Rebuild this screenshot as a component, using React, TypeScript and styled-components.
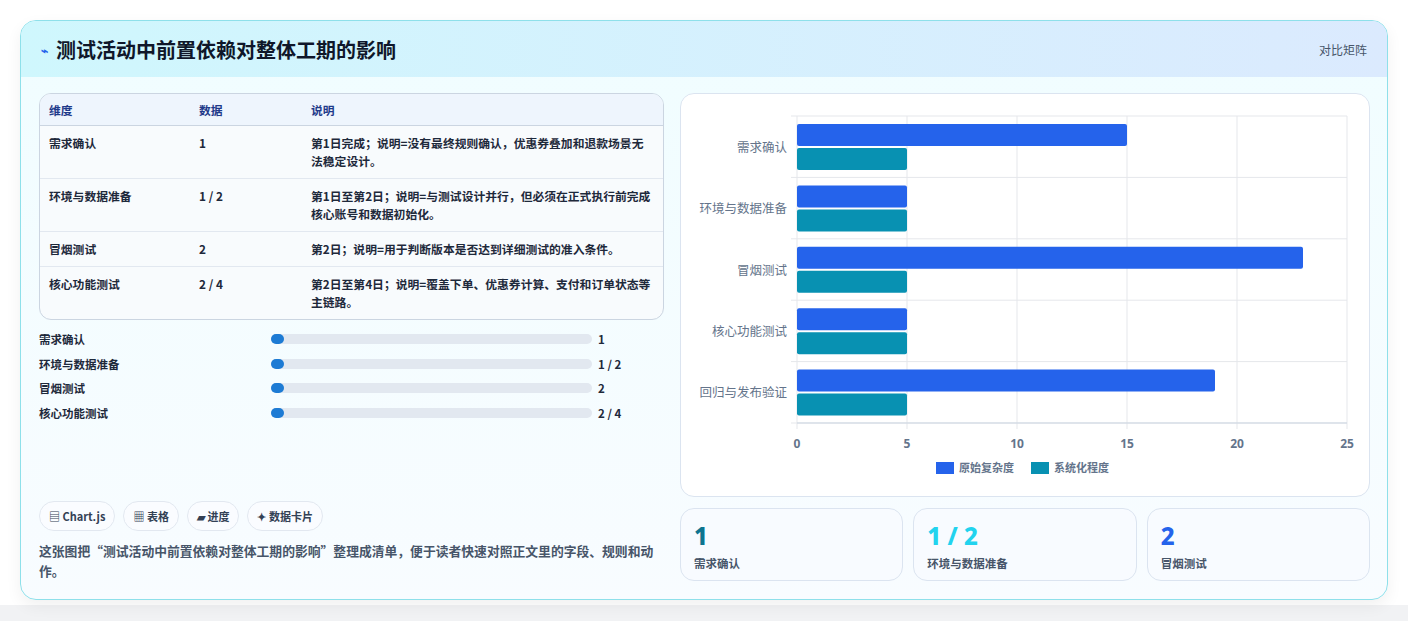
import React from "react";
import styled, { createGlobalStyle } from "styled-components";

const G = createGlobalStyle`
  html,body{margin:0;background:#fff;font-family:"Noto Sans CJK SC","Noto Sans",sans-serif;}
  *{box-sizing:border-box;}
`;
const Page = styled.div`padding:20px 20px 22px 20px;height:621px;background:linear-gradient(#fff 97.5%,#f1f2f4 97.5%);`;
const Card = styled.div`border:1px solid #8ee0ea;border-radius:16px;overflow:hidden;background:linear-gradient(180deg,#f0fdff,#f8fcff);box-shadow:0 6px 16px rgba(0,0,0,.06);height:580px;display:flex;flex-direction:column;`;
const Header = styled.div`height:56px;display:flex;align-items:center;justify-content:space-between;padding:0 20px;background:linear-gradient(90deg,#cff7fd,#dbeafe);`;
const Title = styled.h1`margin:0;font-size:20px;font-weight:700;color:#0f172a;display:flex;align-items:center;gap:8px;`;
const Tag = styled.span`font-size:12px;color:#475569;`;
const Body = styled.div`flex:1;display:grid;grid-template-columns:625px 690px;gap:16px;padding:16px 18px 18px 18px;`;
const Left = styled.div`display:flex;flex-direction:column;`;
const Table = styled.table`width:100%;border-collapse:separate;border-spacing:0;border:1px solid #cbd5e1;border-radius:12px;overflow:hidden;font-size:11.8px;font-weight:700;color:#1e293b;background:#f8fbfd;`;
const Th = styled.th`text-align:left;font-weight:700;color:#1e3a8a;background:#eef5fd;padding:0 9px;border-bottom:1px solid #cbd5e1;height:32px;`;
const Td = styled.td<{first?:boolean}>`padding:8px 9px;vertical-align:top;line-height:18px;border-top:${p=>p.first?"none":"1px solid #e2e8f0"};`;
const Bars = styled.div`display:flex;flex-direction:column;gap:6.5px;margin-top:10px;`;
const BarRow = styled.div`display:grid;grid-template-columns:226px 321px 60px;gap:6px;align-items:center;font-size:11.5px;font-weight:700;color:#1e293b;height:18px;`;
const Track = styled.div`height:10px;background:#e2e8f0;border-radius:5px;`;
const Dot = styled.div`width:13px;height:10px;border-radius:5px;background:#1d7bd4;`;
const Chips = styled.div`margin-top:auto;display:flex;gap:8px;`;
const Chip = styled.span`border:1px solid #e2e8f0;border-radius:15px;padding:6px 9px;font-size:11px;font-weight:700;color:#334155;background:#fafcff;`;
const Desc = styled.p`margin:10px 0 0;font-size:12.8px;line-height:20px;color:#475569;font-weight:600;`;
const Right = styled.div`display:flex;flex-direction:column;gap:11px;`;
const ChartBox = styled.div`border:1px solid #dbe4f0;border-radius:14px;background:#fff;height:404px;`;
const Stats = styled.div`display:grid;grid-template-columns:repeat(3,1fr);gap:10px;`;
const Stat = styled.div`border:1px solid #dbe4f0;border-radius:14px;background:#f8fbff;height:73px;padding:12px 13px;`;
const Num = styled.div<{c:string}>`font-size:24px;font-weight:800;color:${p=>p.c};font-family:"Noto Sans","Liberation Sans",sans-serif;line-height:30px;`;
const Lbl = styled.div`font-size:11.5px;color:#475569;font-weight:600;margin-top:4px;`;

const rows = [
  ["需求确认","1","第1日完成；说明=没有最终规则确认，优惠券叠加和退款场景无法稳定设计。"],
  ["环境与数据准备","1 / 2","第1日至第2日；说明=与测试设计并行，但必须在正式执行前完成核心账号和数据初始化。"],
  ["冒烟测试","2","第2日；说明=用于判断版本是否达到详细测试的准入条件。"],
  ["核心功能测试","2 / 4","第2日至第4日；说明=覆盖下单、优惠券计算、支付和订单状态等主链路。"],
];
const cats = ["需求确认","环境与数据准备","冒烟测试","核心功能测试","回归与发布验证"];
const blue = [15,5,23,5,19];

function Chart(){
  const x0=116,x1=666,y0=22,h=307,step=h/5,u=(x1-x0)/25;
  return <svg width="690" height="404">
    {[0,5,10,15,20,25].map(v=><g key={v}>
      <line x1={x0+v*u} x2={x0+v*u} y1={y0} y2={y0+h+6} stroke="#e5e7eb"/>
      <text x={x0+v*u} y={y0+h+25} fontSize="12" fill="#64748b" fontWeight="700" textAnchor="middle" fontFamily="Noto Sans">{v}</text>
    </g>)}
    {[0,1,2,3,4,5].map(i=><line key={i} x1={x0-6} x2={x1} y1={y0+i*step} y2={y0+i*step} stroke="#e5e7eb"/>)}
    <line x1={x0} x2={x1} y1={y0+h} y2={y0+h} stroke="#cbd5e1"/>
    {cats.map((c,i)=>{const t=y0+i*step;return <g key={c}>
      <rect x={x0} y={t+8} width={blue[i]*u} height={22} fill="#2563eb" rx="2"/>
      <rect x={x0} y={t+32} width={5*u} height={22} fill="#0891b2" rx="2"/>
      <text x={x0-10} y={t+step/2+5} fontSize="12.5" fill="#64748b" textAnchor="end">{c}</text>
    </g>})}
    <rect x="255" y="368" width="18" height="12" fill="#2563eb"/>
    <text x="278" y="378" fontSize="11" fill="#64748b" fontWeight="700">原始复杂度</text>
    <rect x="350" y="368" width="18" height="12" fill="#0891b2"/>
    <text x="373" y="378" fontSize="11" fill="#64748b" fontWeight="700">系统化程度</text>
  </svg>;
}

export default function App(){
  return <Page><G/><Card>
    <Header><Title><span style={{fontSize:12,color:"#2563eb"}}>⌁</span>测试活动中前置依赖对整体工期的影响</Title><Tag>对比矩阵</Tag></Header>
    <Body>
      <Left>
        <Table><thead><tr><Th style={{width:150}}>维度</Th><Th style={{width:112}}>数据</Th><Th>说明</Th></tr></thead>
          <tbody>{rows.map((r,i)=><tr key={i}><Td first={i===0}>{r[0]}</Td><Td first={i===0}>{r[1]}</Td><Td first={i===0}>{r[2]}</Td></tr>)}</tbody></Table>
        <Bars>{rows.map(r=><BarRow key={r[0]}><span>{r[0]}</span><Track><Dot/></Track><span>{r[1]}</span></BarRow>)}</Bars>
        <Chips><Chip>▤ Chart.js</Chip><Chip>▦ 表格</Chip><Chip>▰ 进度</Chip><Chip>✦ 数据卡片</Chip></Chips>
        <Desc>这张图把“测试活动中前置依赖对整体工期的影响”整理成清单，便于读者快速对照正文里的字段、规则和动作。</Desc>
      </Left>
      <Right>
        <ChartBox><Chart/></ChartBox>
        <Stats>
          <Stat><Num c="#0e7490">1</Num><Lbl>需求确认</Lbl></Stat>
          <Stat><Num c="#22d3ee">1 / 2</Num><Lbl>环境与数据准备</Lbl></Stat>
          <Stat><Num c="#2563eb">2</Num><Lbl>冒烟测试</Lbl></Stat>
        </Stats>
      </Right>
    </Body>
  </Card></Page>;
}
